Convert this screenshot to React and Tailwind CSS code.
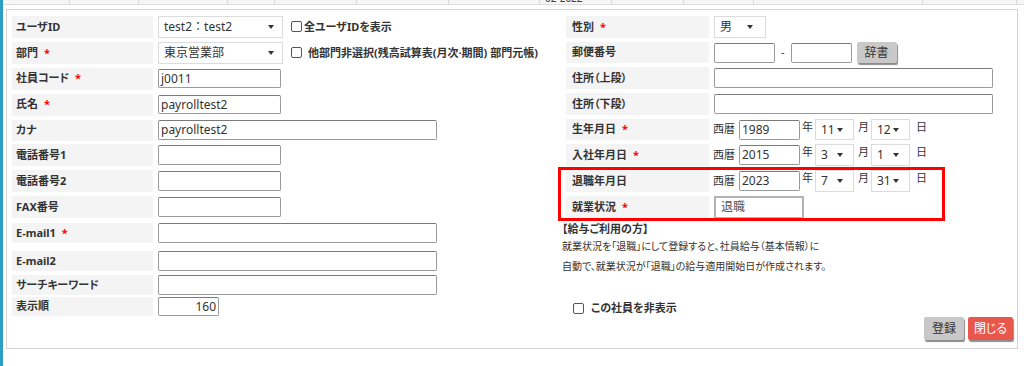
import React from "react";

const Caret = () => (
  <span className="inline-block w-0 h-0 border-x-[3px] border-x-transparent border-t-[4px] border-t-[#333]" />
);

const Req = () => <span className="text-[#f00] ml-[6px] font-bold text-[11px]">*</span>;

const LLabel = ({ children, req }) => (
  <div className="w-[141px] shrink-0 h-full bg-[#f4f4f4] pl-[4px] flex items-center text-[11px] font-bold text-[#333]">
    {children}
    {req && <Req />}
  </div>
);

const RLabel = ({ children, req }) => (
  <div className="w-[143px] shrink-0 h-full bg-[#f4f4f4] pl-[6px] flex items-center text-[11px] font-bold text-[#333]">
    {children}
    {req && <Req />}
  </div>
);

const Select = ({ w, text, h = "h-full", caretPos = "right-[8px]" }) => (
  <div className={`relative ${w} ${h} border border-[#dcdcdc] bg-white flex items-center pl-[5px] text-[12px] text-[#333] [font-feature-settings:normal]`}>
    <span>{text}</span>
    <span className={`absolute ${caretPos} top-1/2 -translate-y-1/2 flex`}>
      <Caret />
    </span>
  </div>
);

const Input = ({ w, h = "h-[20px]", value, right }) => (
  <div
    className={`${w} ${h} border border-[#9a9a9a] border-t-[#7a7a7a] rounded-[2px] bg-white flex items-center text-[12px] text-[#333] ${
      right ? "justify-end pr-[2px]" : "pl-[2px]"
    }`}
  >
    {value}
  </div>
);

const Check = () => (
  <span className="inline-block w-[11px] h-[11px] border border-[#555] rounded-[2px] bg-white shrink-0" />
);

const strip = [67, 69, 89, 47, 82, 92, 91, 72, 72, 70, 169, 94];

export default function App() {
  return (
    <div className="relative w-[1024px] h-[366px] bg-white overflow-hidden [font-family:'Noto_Sans','Noto_Sans_CJK_JP',sans-serif] [font-feature-settings:'palt'] text-[#333]">
      {/* left blue bar */}
      <div className="absolute left-0 top-0 w-[3px] h-full bg-[#2a9fc2]" />
      {/* top strip */}
      <div className="ml-[3px] h-[5px] flex bg-[#f6f6f6] border-b border-[#dcdcdc] overflow-hidden">
        {strip.map((w, i) => (
          <div
            key={i}
            style={{ width: w }}
            className="h-full border-r border-[#dcdcdc] shrink-0 overflow-hidden"
          >
            {i === 7 && (
              <div className="text-[10px] leading-[10px] -mt-[7px] ml-[5px] text-[#444]">02-2022</div>
            )}
          </div>
        ))}
      </div>

      {/* panel */}
      <div className="ml-[6px] mt-[4px] w-[1012px] h-[340px] border border-[#d4d4d4] flex flex-col">
        <div className="flex h-[306px]">
          {/* left column */}
          <div className="w-[551px] shrink-0 pl-[5px] flex flex-col">
            <div className="flex gap-[5px] h-[22px] mt-[6px]">
              <LLabel>ユーザID</LLabel>
              <Select w="w-[125px]" text="test2：test2" />
              <div className="flex items-center ml-[3px] gap-[2px] text-[11px] font-bold">
                <Check />
                <span>全ユーザIDを表示</span>
              </div>
            </div>
            <div className="flex gap-[5px] h-[22px] mt-[4px]">
              <LLabel req>部門</LLabel>
              <Select w="w-[125px]" text="東京営業部" />
              <div className="flex items-center ml-[3px] gap-[6px] text-[11px] font-bold">
                <Check />
                <span>他部門非選択(残高試算表(月次·期間) 部門元帳)</span>
              </div>
            </div>
            <div className="flex gap-[5px] h-[22px] mt-[4px] items-center">
              <LLabel req>社員コード</LLabel>
              <Input w="w-[123px]" h="h-[19px]" value="j0011" />
            </div>
            <div className="flex gap-[5px] h-[22px] mt-[4px] items-center">
              <LLabel req>氏名</LLabel>
              <Input w="w-[123px]" h="h-[19px]" value="payrolltest2" />
            </div>
            <div className="flex gap-[5px] h-[22px] mt-[4px] items-center">
              <LLabel>カナ</LLabel>
              <Input w="w-[279px]" value="payrolltest2" />
            </div>
            <div className="flex gap-[5px] h-[22px] mt-[3px] items-center">
              <LLabel>電話番号1</LLabel>
              <Input w="w-[123px]" />
            </div>
            <div className="flex gap-[5px] h-[22px] mt-[4px] items-center">
              <LLabel>電話番号2</LLabel>
              <Input w="w-[123px]" />
            </div>
            <div className="flex gap-[5px] h-[22px] mt-[4px] items-center">
              <LLabel>FAX番号</LLabel>
              <Input w="w-[123px]" />
            </div>
            <div className="flex gap-[5px] h-[20px] mt-[5px] items-center">
              <LLabel req>E-mail1</LLabel>
              <Input w="w-[279px]" />
            </div>
            <div className="flex gap-[5px] h-[20px] mt-[8px] items-center">
              <LLabel>E-mail2</LLabel>
              <Input w="w-[279px]" />
            </div>
            <div className="flex gap-[5px] h-[20px] mt-[4px] items-center">
              <LLabel>サーチキーワード</LLabel>
              <Input w="w-[279px]" />
            </div>
            <div className="flex gap-[5px] h-[19px] mt-[2px] items-center">
              <LLabel>表示順</LLabel>
              <Input w="w-[61px]" h="h-[19px]" value="160" right />
            </div>
          </div>

          {/* right column */}
          <div className="flex-1 flex flex-col">
            <div className="flex gap-[5px] h-[22px] mt-[6px] pl-[8px]">
              <RLabel req>性別</RLabel>
              <Select w="w-[52px]" text="男" caretPos="right-[12px]" />
            </div>
            <div className="flex gap-[5px] h-[22px] mt-[4px] pl-[8px] items-center">
              <RLabel>郵便番号</RLabel>
              <Input w="w-[61px]" />
              <span className="text-[11px] mx-[1px]">-</span>
              <Input w="w-[61px]" />
              <div className="w-[40px] h-[21px] bg-[#c9c9c9] rounded-[2px] shadow-[1px_2px_1px_rgba(0,0,0,0.45)] flex items-center justify-center text-[12px] text-[#333]">
                辞書
              </div>
            </div>
            <div className="flex gap-[5px] h-[22px] mt-[4px] pl-[8px] items-center">
              <RLabel>住所（上段）</RLabel>
              <Input w="w-[279px]" />
            </div>
            <div className="flex gap-[5px] h-[22px] mt-[4px] pl-[8px] items-center">
              <RLabel>住所（下段）</RLabel>
              <Input w="w-[279px]" />
            </div>
            <DateRow label="生年月日" req y="1989" m="11" d="12" />
            <DateRow label="入社年月日" req y="2015" m="3" d="1" />
            <div className="relative">
              <div className="absolute left-0 top-[1px] w-[387px] h-[54px] border-[3px] border-[#f00] pointer-events-none" />
              <DateRow label="退職年月日" y="2023" m="7" d="31" />
              <div className="flex gap-[5px] h-[22px] mt-[4px] pl-[8px] items-center">
                <RLabel req>就業状況</RLabel>
                <div className="w-[90px] h-[23px] border-2 border-[#b4b4b4] bg-white flex items-center pl-[5px] text-[12px] text-[#555]">
                  退職
                </div>
              </div>
            </div>
            <div className="pl-[4px] mt-[4px] h-[14px] leading-[14px] text-[11px] font-bold">【給与ご利用の方】</div>
            <div className="pl-[4px] text-[10px] leading-[20px]">
              <div>就業状況を「退職」にして登録すると、社員給与（基本情報）に</div>
              <div>自動で、就業状況が「退職」の給与適用開始日が作成されます。</div>
            </div>
            <div className="flex items-center pl-[15px] mt-[24px] h-[16px] gap-[7px] text-[11px] font-bold">
              <Check />
              <span>この社員を非表示</span>
            </div>
          </div>
        </div>

        {/* buttons */}
        <div className="flex justify-end gap-[4px] pr-[4px] mt-[1px]">
          <div className="w-[40px] h-[23px] bg-[#c8c8c8] rounded-[2px] shadow-[1px_2px_1px_rgba(0,0,0,0.45)] flex items-center justify-center text-[12px] text-[#333]">
            登録
          </div>
          <div className="w-[45px] h-[23px] bg-[#e8564c] rounded-[2px] shadow-[1px_2px_1px_rgba(0,0,0,0.45)] flex items-center justify-center text-[12px] text-white">
            閉じる
          </div>
        </div>
      </div>
    </div>
  );
}

function DateRow({ label, req, y, m, d }) {
  return (
    <div className="flex h-[22px] mt-[4px] pl-[8px] items-center text-[11px]">
      <RLabel req={req}>{label}</RLabel>
      <span className="ml-[4px]">西暦</span>
      <div className="ml-[4px]">
        <Input w="w-[61px]" value={y} />
      </div>
      <span className="ml-[2px] self-start">年</span>
      <div className="ml-[2px] h-full">
        <Select w="w-[39px]" text={m} caretPos="right-[10px]" />
      </div>
      <span className="ml-[4px] self-start">月</span>
      <div className="ml-[2px] h-full">
        <Select w="w-[39px]" text={d} caretPos="right-[10px]" />
      </div>
      <span className="ml-[6px] self-start">日</span>
    </div>
  );
}
